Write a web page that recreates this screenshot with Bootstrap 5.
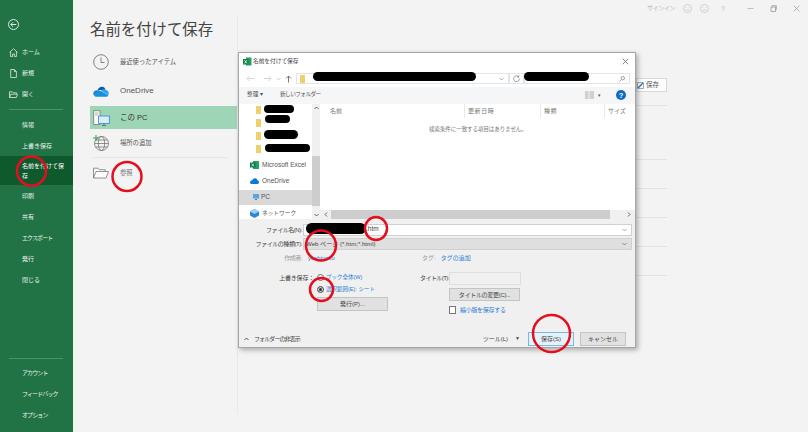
<!DOCTYPE html>
<html lang="ja">

<head>
  <meta charset="UTF-8" />
  <title>名前を付けて保存</title>
  <link href="https://cdn.jsdelivr.net/npm/bootstrap@5.3.2/dist/css/bootstrap.min.css" rel="stylesheet" />
  <style>
    html, body { height: 432px; overflow: hidden; }
    body { font-family: "Liberation Sans", "Noto Sans CJK JP", sans-serif; background: #f3f3f3; color: #444; font-size: 6px; line-height: 1; }
    svg { display: block; flex: none; }

    .page { width: 808px; height: 432px; position: relative; }

    /* backstage sidebar */
    .side { width: 72.5px; background: #217346; color: #e8f3ec; padding: 19px 0 6.5px; flex: none; }
    .side-back { height: 20px; padding-left: 8px; margin-bottom: 2.5px; }
    .side-row { height: 21px; padding-left: 22px; display: flex; align-items: center; position: relative; }
    .side-row svg { position: absolute; left: 9px; top: 6px; }
    .side-sel { height: 29px; background: #0e5a2d; line-height: 10px; padding-right: 6px; color: #fff; }
    .side-line { height: 1px; background: #4d9069; margin: 4.5px 10px 4px 9px; }
    .kana { letter-spacing: -.9px; }

    /* main pane */
    .top-strip { height: 16px; color: #b5b5b5; padding-right: 8px; }
    .sign-in { letter-spacing: -.4px; margin-right: 8px; }
    .help-mark { font-size: 7px; width: 6px; margin: 0 4px 0 12px; }
    .page-title { font-size: 15.4px; height: 32px; padding: 6px 0 0; color: #444; line-height: 16px; }
    .place-col { width: 147px; margin-left: 17.5px; flex: none; }
    .place { height: 28px; display: flex; align-items: center; font-size: 6.3px; color: #555; padding-left: 3px; }
    .place-text { margin-left: 11px; }
    .place-tall { height: 30px; }
    .place .latin { font-size: 8px; }
    .place-sel { height: 23px; background: #9fd5b7; color: #333; }
    .place-sel .latin { font-size: 7.5px; margin-left: 10px; }
    .place-line { height: 1px; background: #e6e6e6; margin: 0 10px 0 3px; }
    .place-browse { height: 30px; align-items: flex-start; padding-top: 9px; color: #777; }
    .place-browse .place-text { margin-top: 3px; }
    .detail-col { border-left: 1px solid #e8e8e8; height: 398px; padding-left: 398px; }
    .detail-save { width: 31px; height: 14px; margin-top: 62px; border: 1px solid #d8d8d8; background: #fdfdfd; font-size: 6.5px; color: #555; gap: 2px; }
    .detail-rule { width: 31px; height: 1px; background: #e2e2e2; margin-top: 28px; }
    .rule-first { margin-top: 13px; }
    .rule-second { margin-top: 53px; }

    /* dialog window */
    .dlg { position: absolute; left: 238px; top: 52px; width: 398px; height: 296px; background: #f0f0f0; border: 1px solid #a5a5a5; box-shadow: 2px 2px 5px rgba(0, 0, 0, .3); }
    .dlg-title { height: 18px; background: #fff; padding: 0 6px 0 4px; font-size: 5.7px; color: #444; gap: 1px; }
    .dlg-addr { height: 16px; background: #fff; padding: 0 5px 0 7px; }
    .addr-box { height: 11px; border: 1px solid #e4e4e4; background: #fff; }
    .addr-path { width: 214px; padding-left: 3px; }
    .addr-refresh { width: 15px; }
    .addr-search { width: 107px; padding-right: 4px; }
    .dlg-tools { height: 17px; background: #f5f6f7; padding: 0 9px 0 8px; font-size: 5.7px; color: #555; }
    .new-folder { margin-left: 17px; letter-spacing: -.6px; }
    .view-caret { font-size: 5px; }
    .help-icon { margin-left: 15px; }
    .dlg-body { height: 115px; background: #fff; position: relative; }
    .nav-pane { width: 73px; flex: none; font-size: 6.5px; color: #555; overflow: hidden; }
    .nav-folder { height: 13px; padding-left: 17px; }
    .nav-item { height: 16.5px; padding-left: 11px; gap: 3px; }
    .nav-first { margin-top: 1px; }
    .nav-item-sel { height: 15px; background: #d9d9d9; padding-left: 14px; gap: 2px; }
    .nav-net { margin-top: 1px; font-size: 5.7px; }
    .vbar { width: 8px; background: #f0f0f0; flex: none; position: relative; height: 115px; }
    .vbar-thumb { position: absolute; left: 0; right: 0; top: 52px; height: 50px; background: #cdcdcd; }
    .scroll-mark { position: absolute; color: #555; }
    .mark-up { left: 1.5px; top: 2px; }
    .mark-down { left: 1.5px; bottom: 2px; }
    .mark-left { left: 4px; top: 2.5px; }
    .mark-right { right: 4px; top: 2.5px; }
    .file-head { height: 14px; color: #777; font-size: 6px; position: relative; }
    .head-col { padding: 4px 0 0 3px; height: 14px; border-right: 1px solid #e8e8e8; flex: none; letter-spacing: .6px; }
    .head-name { width: 145px; padding-left: 10px; letter-spacing: 0; }
    .head-date { width: 76px; }
    .head-kind { width: 64px; }
    .head-size { border: 0; letter-spacing: 0; }
    .empty-msg { color: #777; font-size: 5.45px; margin: 9px 0 0 109px; white-space: nowrap; }
    .hbar { position: absolute; left: 81px; right: 0; bottom: 0; height: 9px; background: #f0f0f0; }
    .hbar-thumb { position: absolute; left: 11px; right: 25px; top: 0; bottom: 0; background: #cdcdcd; }

    /* form under the file list */
    .dlg-form { height: 129px; font-size: 6px; color: #444; }
    .frow-label { width: 64px; text-align: right; flex: none; padding-right: 1px; letter-spacing: -.45px; }
    .fname { height: 12px; margin: 5px 3px 0 0; }
    .fname-input { flex: 1; height: 12px; background: #fff; border: 1px solid #d0d0d0; padding-left: 62px; font-size: 6.5px; }
    .ftype { height: 12px; margin: 2px 3px 0 0; }
    .ftype-input { flex: 1; height: 12px; background: #dfdfdf; border: 1px solid #d0d0d0; padding-left: 2px; font-size: 6.1px; }
    .fmeta { height: 10px; margin-top: 3px; }
    .fmeta-label { color: #999; }
    .blue-link { color: #2b7cd3; }
    .meta-author { margin-left: 5px; width: 114px; }
    .meta-tag { margin-left: 5px; }
    .opt-cols { height: 51px; margin-top: 9px; }
    .opt-left { width: 181px; flex: none; }
    .opt-line { height: 12px; }
    .opt-label { width: 75px; flex: none; text-align: right; letter-spacing: -.2px; }
    .opt-text { font-size: 5.5px; }
    .radio-dot { width: 7px; height: 7px; border-radius: 50%; border: 1px solid #666; background: #fff; margin: 0 2px 0 3px; flex: none; }
    .radio-on { background: #333; box-shadow: inset 0 0 0 1px #ddd; }
    .flat-btn { background: #e1e1e1; border: 1px solid #c4c4c4; height: 14px; font-size: 6px; color: #444; padding: 0; line-height: 12px; text-align: center; border-radius: 0; }
    .publish-btn { width: 71px; margin: 1px 0 0 78px; }
    .title-label { letter-spacing: -.55px; width: 28px; flex: none; white-space: nowrap; }
    .title-input { width: 72px; height: 13px; background: #f0f0f0; border: 1px solid #dedede; margin-left: 1px; }
    .title-btn { width: 71px; margin: 3px 0 0 29px; height: 13px; letter-spacing: -.3px; }
    .thumb-line { margin-top: 5px; letter-spacing: -.3px; }
    .check-box { width: 7px; height: 8px; background: #fff; border: 1px solid #777; margin-left: 29px; flex: none; }
    .foot { height: 14px; margin-top: 9px; padding: 0 9px 0 5px; }
    .foot-chevron { margin-right: 5px; }
    .tool-caret { margin: 0 8px 0 7px; font-size: 5px; }
    .main-btn { width: 46px; }
    .cancel-btn { margin-left: 6px; }
    .save-btn { background: #e5f1fb; border-color: #7ab8e0; }

    /* marker overlay */
    .blob { position: absolute; background: #000; border-radius: 6px; }
    .marks { position: absolute; left: 0; top: 0; pointer-events: none; }
  </style>
</head>

<body>
  <div class="page d-flex">
    <nav class="side d-flex flex-column">
      <div class="side-back">
        <svg width="11" height="11" viewBox="0 0 11 11" fill="none" stroke="#eef6f1" stroke-width=".9"><circle cx="5.5" cy="5.5" r="5"/><path d="M8.3 5.5H2.8M5 3.3 2.8 5.5 5 7.7"/></svg>
      </div>
      <div class="side-row">
        <svg width="9" height="9" viewBox="0 0 9 9" fill="none" stroke="#dcebe2" stroke-width=".8"><path d="M.5 4.500 4.500.7l4 3.800M1.600 3.600v5h2V6h1.800v2.600h2v-5"/></svg>
        ホーム
      </div>
      <div class="side-row">
        <svg width="9" height="9" viewBox="0 0 9 9" fill="none" stroke="#dcebe2" stroke-width=".8"><path d="M1.700.5h3.700l2 2v6h-5.700zM5.400.5v2h2"/></svg>
        新規
      </div>
      <div class="side-row">
        <svg width="9" height="9" viewBox="0 0 9 9" fill="none" stroke="#dcebe2" stroke-width=".8"><path d="M.5 7.500V1.800h3l.8 1h3.200v1M.5 7.500l1.200-3.300h6.800l-1.200 3.300z"/></svg>
        開く
      </div>
      <div class="side-line"></div>
      <div class="side-row">情報</div>
      <div class="side-row">上書き保存</div>
      <div class="side-row side-sel">名前を付けて保存</div>
      <div class="side-row">印刷</div>
      <div class="side-row">共有</div>
      <div class="side-row"><span class="kana">エクスポート</span></div>
      <div class="side-row">発行</div>
      <div class="side-row">閉じる</div>
      <div class="flex-grow-1"></div>
      <div class="side-line"></div>
      <div class="side-row"><span class="kana">アカウント</span></div>
      <div class="side-row"><span class="kana">フィードバック</span></div>
      <div class="side-row"><span class="kana">オプション</span></div>
    </nav>

    <main class="flex-grow-1 d-flex flex-column">
      <div class="top-strip d-flex align-items-center justify-content-end">
        <span class="sign-in">サインイン</span>
        <svg width="9" height="9" viewBox="0 0 9 9" fill="none" stroke="#bbb" stroke-width=".6"><circle cx="4.500" cy="4.500" r="4"/><path d="M2.700 5.500q1.800 1.400 3.600 0M3 3v.8M6 3v.8"/></svg>
        <svg class="ms-2" width="9" height="9" viewBox="0 0 9 9" fill="none" stroke="#bbb" stroke-width=".6"><circle cx="4.500" cy="4.500" r="4"/><path d="M2.700 6.300q1.800-1.400 3.600 0M3 3v.8M6 3v.8"/></svg>
        <span class="help-mark">?</span>
        <svg class="ms-3" width="7" height="7" viewBox="0 0 7 7" stroke="#aaa" stroke-width=".7"><path d="M.5 3.500h6"/></svg>
        <svg class="ms-3" width="7" height="7" viewBox="0 0 7 7" fill="none" stroke="#999" stroke-width=".8"><path d="M1 2h4.500v4.500H1zM2.200 2V.7h4.100v4.100H5.500"/></svg>
        <svg class="ms-3" width="7" height="7" viewBox="0 0 7 7" stroke="#999" stroke-width=".7"><path d="m.7.700 5.600 5.600M6.300.700.700 6.300"/></svg>
      </div>

      <div class="d-flex flex-grow-1">
        <div class="place-col">
          <div class="page-title">名前を付けて保存</div>
          <div class="place">
            <svg width="16" height="16" viewBox="0 0 16 16" fill="none" stroke="#666" stroke-width=".8"><circle cx="8" cy="8" r="7.300"/><path d="M8 3.500V8.500h3.500"/></svg>
            <span class="place-text">最近使ったアイテム</span>
          </div>
          <div class="place place-tall">
            <svg width="16" height="11" viewBox="0 0 16 11"><path fill="#0a5fb4" d="M4.500 4.300C5.300 1.800 7.400.500 9.300.800c1.700.200 3 1.400 3.400 3z"/><path fill="#1a86d9" d="M3.800 4.300c-2 0-3.500 1.500-3.500 3.200 0 .800.300 1.500.800 2.100L8 5.500 6 4.600z"/><path fill="#28a8ea" d="M8 4.500c1-1 3-1.400 4.400-.6 2 .1 3.400 1.500 3.400 3.300 0 .8-.3 1.500-.7 2z"/><path fill="#1490df" d="M1 9.500c.6.800 1.500 1.300 2.700 1.300h9.600c.8 0 1.500-.4 2-1.200L8 5z"/></svg>
            <span class="place-text latin">OneDrive</span>
          </div>
          <div class="place place-sel">
            <svg width="17" height="16" viewBox="0 0 17 16" fill="none"><path d="M.700.700h6.300v13.800H.700z" fill="#fff" stroke="#666" stroke-width=".7"/><path d="M2 3h3.500M2 5h3.500" stroke="#777" stroke-width=".6"/><path d="M5.500 6h11v7.500h-11z" fill="#d9ecfa" stroke="#2b88d8" stroke-width=".8"/><path d="M9 15.500h4M11 13.500v2" stroke="#555" stroke-width=".7"/></svg>
            <span class="place-text latin">この PC</span>
          </div>
          <div class="place">
            <svg width="16" height="16" viewBox="0 0 16 16" fill="none" stroke="#666" stroke-width=".7"><circle cx="8.500" cy="8.500" r="7"/><ellipse cx="8.500" cy="8.500" rx="3.200" ry="7"/><path d="M1.500 8.500h14M2.500 5h12M2.500 12h12"/><path d="M3 0v6M0 3h6" stroke="#2da44e" stroke-width="1"/></svg>
            <span class="place-text">場所の追加</span>
          </div>
          <div class="place-line"></div>
          <div class="place place-browse">
            <svg width="16" height="12" viewBox="0 0 16 12" fill="none" stroke="#777" stroke-width=".8"><path d="M.500 11V1.200h4.500l1.200 1.500h6v2M.500 11l2.500-6.500h12.500L13 11z" fill="#fdfdfd"/></svg>
            <span class="place-text">参照</span>
          </div>
        </div>

        <div class="detail-col">
          <div class="detail-save d-flex align-items-center">
            <svg width="7" height="7" viewBox="0 0 7 7" fill="none"><path d="M.5.500h6v6h-6z" stroke="#777" stroke-width=".6"/><path d="M1 6 6 1" stroke="#1f76c4" stroke-width="1.200"/></svg>
            <span>保存</span>
          </div>
          <div class="detail-rule rule-first"></div>
          <div class="detail-rule rule-second"></div>
          <div class="detail-rule"></div>
          <div class="detail-rule"></div>
          <div class="detail-rule"></div>
          <div class="detail-rule"></div>
        </div>
      </div>
    </main>

    <section class="dlg d-flex flex-column">
      <div class="dlg-title d-flex align-items-center">
        <svg width="9" height="9" viewBox="0 0 9 9"><path fill="#21a366" d="M3 .500h5.500v8H3z"/><path fill="#107c41" d="M0 2h5.500v5.500H0z"/><path stroke="#fff" stroke-width=".8" d="m1.500 3.200 2.500 3.200M4 3.200 1.500 6.400"/></svg>
        <span>名前を付けて保存</span>
        <svg class="ms-auto" width="7" height="7" viewBox="0 0 7 7" stroke="#555" stroke-width=".7"><path d="m.7.700 5.600 5.600M6.300.700.700 6.300"/></svg>
      </div>

      <div class="dlg-addr d-flex align-items-center">
        <svg width="9" height="7" viewBox="0 0 9 7" fill="none" stroke="#ccc" stroke-width=".8"><path d="M8 3.500H1M3.500 1 1 3.500 3.500 6"/></svg>
        <svg class="ms-2" width="9" height="7" viewBox="0 0 9 7" fill="none" stroke="#ccc" stroke-width=".8"><path d="M1 3.500h7M5.500 1 8 3.500 5.500 6"/></svg>
        <svg class="ms-1" width="5" height="4" viewBox="0 0 5 4" fill="none" stroke="#bbb" stroke-width=".7"><path d="m.5 1 2 2 2-2"/></svg>
        <svg class="ms-1" width="7" height="8" viewBox="0 0 7 8" fill="none" stroke="#555" stroke-width=".8"><path d="M3.500 7.500V1M1 3.500 3.500 1 6 3.500"/></svg>
        <div class="addr-box addr-path d-flex align-items-center ms-1">
          <svg width="5" height="8" viewBox="0 0 5 8"><path fill="#f2cf6e" d="M0 0h5v8H0z"/></svg>
          <svg class="ms-auto me-1" width="5" height="4" viewBox="0 0 5 4" fill="none" stroke="#888" stroke-width=".7"><path d="m.5 1 2 2 2-2"/></svg>
        </div>
        <div class="addr-box addr-refresh d-flex align-items-center justify-content-center">
          <svg width="7" height="7" viewBox="0 0 7 7" fill="none" stroke="#777" stroke-width=".7"><path d="M5.700 1.800A2.900 2.900 0 1 0 6.400 3.500M5.800.4v1.700H4.100"/></svg>
        </div>
        <div class="addr-box addr-search d-flex align-items-center justify-content-end ms-auto">
          <svg width="6" height="6" viewBox="0 0 6 6" fill="none" stroke="#777" stroke-width=".7"><circle cx="3.800" cy="2.200" r="1.700"/><path d="M2.500 3.500.5 5.500"/></svg>
        </div>
      </div>

      <div class="dlg-tools d-flex align-items-center">
        <span>整理 ▾</span>
        <span class="new-folder">新しいフォルダー</span>
        <svg class="ms-auto" width="9" height="8" viewBox="0 0 9 8" fill="none" stroke="#999" stroke-width=".8"><path d="M0 1h3.500M0 3h3.500M0 5h3.500M0 7h3.500M4.500 1H9M4.500 3H9M4.500 5H9M4.500 7H9"/></svg>
        <span class="view-caret ms-1">▾</span>
        <svg class="help-icon" width="10" height="10" viewBox="0 0 10 10"><circle cx="5" cy="5" r="5" fill="#0a6cc2"/><text x="5" y="7.500" font-size="7.500" font-weight="700" text-anchor="middle" fill="#fff" font-family="Liberation Sans">?</text></svg>
      </div>

      <div class="dlg-body d-flex">
        <div class="nav-pane">
          <div class="nav-folder d-flex align-items-center"><svg width="5" height="8" viewBox="0 0 5 8"><path fill="#f2cf6e" d="M0 0h5v8H0z"/></svg></div>
          <div class="nav-folder d-flex align-items-center"><svg width="5" height="8" viewBox="0 0 5 8"><path fill="#f2cf6e" d="M0 0h5v8H0z"/></svg></div>
          <div class="nav-folder d-flex align-items-center"><svg width="5" height="8" viewBox="0 0 5 8"><path fill="#f2cf6e" d="M0 0h5v8H0z"/></svg></div>
          <div class="nav-folder d-flex align-items-center"><svg width="5" height="8" viewBox="0 0 5 8"><path fill="#f2cf6e" d="M0 0h5v8H0z"/></svg></div>
          <div class="nav-item nav-first d-flex align-items-center">
            <svg width="9" height="8" viewBox="0 0 9 8"><path fill="#21a366" d="M3 0h6v8H3z"/><path fill="#107c41" d="M0 1.500h5.500v5H0z"/><path stroke="#fff" stroke-width=".7" d="m1.500 2.800 2.500 2.400M4 2.800 1.500 5.200"/></svg>
            <span>Microsoft Excel</span>
          </div>
          <div class="nav-item d-flex align-items-center">
            <svg width="9" height="6" viewBox="0 0 9 6"><path fill="#0f78d4" d="M2 2.500C2.500 1 3.800 0 5.300.200 6.500.300 7.300 1.200 7.500 2.300 8.400 2.500 9 3.300 9 4.200 9 5.200 8.200 6 7.200 6H1.800C.8 6 0 5.200 0 4.200 0 3.200.9 2.500 2 2.500z"/></svg>
            <span>OneDrive</span>
          </div>
          <div class="nav-item nav-item-sel d-flex align-items-center">
            <svg width="6" height="6" viewBox="0 0 6 6"><path fill="#57a5e0" d="M0 0h6v4.500H0z"/><path fill="#777" d="M2 5h2v1H2z"/></svg>
            <span>PC</span>
          </div>
          <div class="nav-item nav-net d-flex align-items-center">
            <svg width="9" height="9" viewBox="0 0 9 9"><path fill="#2b88d8" d="M4.500 0 9 2.500v4L4.500 9 0 6.500v-4z"/><path fill="#9fd0f3" d="M4.500 0 9 2.500 4.500 5 0 2.500z"/></svg>
            <span>ネットワーク</span>
          </div>
        </div>

        <div class="vbar">
          <svg class="scroll-mark mark-up" width="5" height="4" viewBox="0 0 5 4" fill="none" stroke="#555" stroke-width=".9"><path d="m.5 3 2-2 2 2"/></svg>
          <div class="vbar-thumb"></div>
          <svg class="scroll-mark mark-down" width="5" height="4" viewBox="0 0 5 4" fill="none" stroke="#555" stroke-width=".9"><path d="m.5 1 2 2 2-2"/></svg>
        </div>

        <div class="flex-grow-1 position-relative">
          <div class="file-head d-flex">
            <div class="head-col head-name">名前</div>
            <div class="head-col head-date">更新日時</div>
            <div class="head-col head-kind">種類</div>
            <div class="head-col head-size">サイズ</div>
          </div>
          <div class="empty-msg">検索条件に一致する項目はありません。</div>
        </div>

        <div class="hbar">
          <svg class="scroll-mark mark-left" width="4" height="5" viewBox="0 0 4 5" fill="none" stroke="#555" stroke-width=".9"><path d="M3 .5l-2 2 2 2"/></svg>
          <div class="hbar-thumb"></div>
          <svg class="scroll-mark mark-right" width="4" height="5" viewBox="0 0 4 5" fill="none" stroke="#555" stroke-width=".9"><path d="m1 .5 2 2-2 2"/></svg>
        </div>
      </div>

      <div class="dlg-form d-flex flex-column">
        <div class="fname d-flex align-items-center">
          <span class="frow-label">ファイル名(N):</span>
          <div class="fname-input d-flex align-items-center">.htm
            <svg class="ms-auto me-1" width="5" height="4" viewBox="0 0 5 4" fill="none" stroke="#888" stroke-width=".7"><path d="m.5 1 2 2 2-2"/></svg>
          </div>
        </div>
        <div class="ftype d-flex align-items-center">
          <span class="frow-label">ファイルの種類(T):</span>
          <div class="ftype-input d-flex align-items-center">Web ページ (*.htm;*.html)
            <svg class="ms-auto me-1" width="5" height="4" viewBox="0 0 5 4" fill="none" stroke="#666" stroke-width=".7"><path d="m.5 1 2 2 2-2"/></svg>
          </div>
        </div>
        <div class="fmeta d-flex align-items-center">
          <span class="frow-label fmeta-label">作成者:</span>
          <span class="blue-link meta-author">yoshiyasu</span>
          <span class="fmeta-label">タグ:</span>
          <span class="blue-link meta-tag">タグの追加</span>
        </div>
        <div class="opt-cols d-flex">
          <div class="opt-left">
            <div class="opt-line d-flex align-items-center">
              <span class="opt-label">上書き保存：</span>
              <span class="radio-dot"></span>
              <span class="blue-link opt-text">ブック全体(W)</span>
            </div>
            <div class="opt-line d-flex align-items-center">
              <span class="opt-label"></span>
              <span class="radio-dot radio-on"></span>
              <span class="blue-link opt-text">選択範囲(E): シート</span>
            </div>
            <button type="button" class="flat-btn publish-btn d-block">発行(P)...</button>
          </div>
          <div class="flex-grow-1">
            <div class="d-flex align-items-center">
              <span class="title-label">タイトル(T):</span>
              <div class="title-input"></div>
            </div>
            <button type="button" class="flat-btn title-btn d-block">タイトルの変更(C)...</button>
            <div class="thumb-line d-flex align-items-center">
              <span class="check-box"></span>
              <span class="blue-link ms-1">縮小版を保存する</span>
            </div>
          </div>
        </div>
        <div class="foot d-flex align-items-center">
          <svg class="foot-chevron" width="5" height="4" viewBox="0 0 5 4" fill="none" stroke="#444" stroke-width=".9"><path d="m.5 3 2-2 2 2"/></svg>
          <span class="kana">フォルダーの非表示</span>
          <span class="ms-auto">ツール(L)</span>
          <span class="tool-caret">▼</span>
          <button type="button" class="flat-btn main-btn save-btn">保存(S)</button>
          <button type="button" class="flat-btn main-btn cancel-btn">キャンセル</button>
        </div>
      </div>
    </section>

    <!-- 黒塗り -->
    <div class="blob" style="left:313px;top:72px;width:163px;height:9px"></div>
    <div class="blob" style="left:524px;top:72px;width:65px;height:9px"></div>
    <div class="blob" style="left:264px;top:105px;width:30px;height:8px"></div>
    <div class="blob" style="left:265px;top:115px;width:25px;height:8px"></div>
    <div class="blob" style="left:264px;top:130px;width:34px;height:9px"></div>
    <div class="blob" style="left:265px;top:144px;width:45px;height:8px"></div>
    <div class="blob" style="left:306px;top:223px;width:60px;height:11px"></div>

    <!-- 赤丸 -->
    <svg class="marks" width="808" height="432" fill="none" stroke="#e30f1e" stroke-width="2.500">
      <circle cx="31.500" cy="171" r="14.500"/>
      <circle cx="127" cy="176.500" r="14.500"/>
      <ellipse cx="376" cy="228.500" rx="11" ry="11.500"/>
      <circle cx="321" cy="245.500" r="15"/>
      <circle cx="321.500" cy="289.500" r="11.500"/>
      <circle cx="551.500" cy="333.500" r="18.500"/>
    </svg>
  </div>

  <script src="https://cdn.jsdelivr.net/npm/bootstrap@5.3.2/dist/js/bootstrap.bundle.min.js"></script>
</body>

</html>
